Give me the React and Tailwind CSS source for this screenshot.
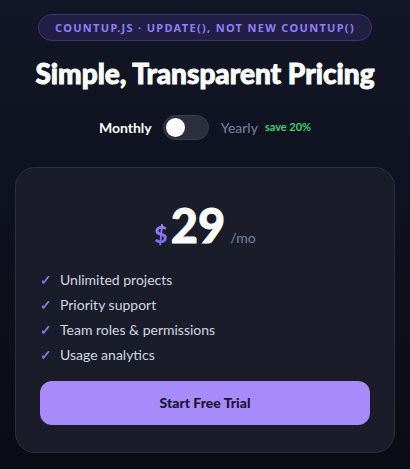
import React, { useState } from "react";

const features = [
  "Unlimited projects",
  "Priority support",
  "Team roles & permissions",
  "Usage analytics",
];

export default function App() {
  const [yearly, setYearly] = useState(false);
  const price = yearly ? 23 : 29;

  return (
    <div
      className="min-h-[469px] w-full bg-gradient-to-b from-[#121626] to-[#0a0c15] flex flex-col items-center pt-[14px] px-[15px]"
      style={{ fontFamily: 'Lato, "Noto Sans", sans-serif' }}
    >
      <div
        className="h-[27px] px-[16px] rounded-full border border-[#3d3770] bg-[#221e45] flex items-center"
        style={{ fontFamily: '"Noto Sans", sans-serif' }}
      >
        <span className="text-[11px] font-bold tracking-[0.12em] text-[#8f7ff7] uppercase leading-none">
          CountUp.js · update(), not new CountUp()
        </span>
      </div>

      <h1 className="mt-[15px] text-[28px] leading-[34px] font-black text-white whitespace-nowrap [-webkit-text-stroke:0.9px_white]">
        Simple, Transparent Pricing
      </h1>

      <div className="mt-[25px] flex items-center">
        <span className="text-[14px] font-bold text-white">Monthly</span>
        <button
          onClick={() => setYearly(!yearly)}
          className="ml-[11px] w-[46px] h-[25px] rounded-full bg-[#2b2e3d] border border-[#3a3e50] flex items-center px-[2px]"
        >
          <span
            className={
              "w-[19px] h-[19px] rounded-full bg-white transition-transform " +
              (yearly ? "translate-x-[21px]" : "translate-x-0")
            }
          />
        </button>
        <span className="ml-[12px] text-[14px] text-[#7c84a3]">Yearly</span>
        <span className="ml-[7px] text-[11px] font-bold text-[#3fcf6a]">save 20%</span>
      </div>

      <div className="mt-[27px] w-full rounded-[20px] border border-[#2c2f3e] bg-[#1a1c29] px-[24px] pt-[31px] pb-[27px]">
        <div className="flex items-baseline justify-center">
          <span className="text-[23px] font-black bg-gradient-to-b from-[#a78bfa] to-[#6d5ee8] bg-clip-text text-transparent">
            $
          </span>
          <span className="ml-[3px] text-[47px] leading-[52px] font-black text-white [-webkit-text-stroke:0.8px_white]">
            {price}
          </span>
          <span className="ml-[5px] text-[14px] text-[#7c84a3]">/mo</span>
        </div>

        <ul className="mt-[15px] flex flex-col">
          {features.map((f) => (
            <li key={f} className="h-[25px] flex items-center">
              <span className="w-[20px] text-[14px] font-bold bg-gradient-to-b from-[#a78bfa] to-[#6d5ee8] bg-clip-text text-transparent">
                ✓
              </span>
              <span className="text-[14px] text-[#d3d7e4]">{f}</span>
            </li>
          ))}
        </ul>

        <button className="mt-[14px] w-full h-[44px] rounded-[12px] bg-[#a78bfa] text-[14px] font-black text-[#1b1533]">
          Start Free Trial
        </button>
      </div>
    </div>
  );
}
